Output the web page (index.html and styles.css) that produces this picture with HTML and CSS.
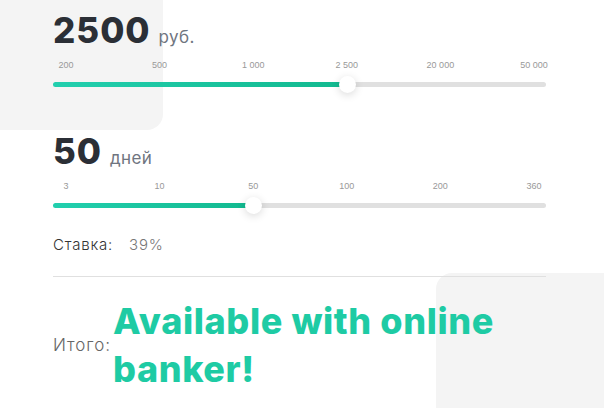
FILE: index.html
```
<!DOCTYPE html>
<html lang="ru">
<head>
<meta charset="utf-8">
<link rel="stylesheet" href="styles.css">
</head>
<body>
<div class="calc">
  <section class="param">
    <div class="value"><span class="num">2500</span><span class="unit">руб.</span></div>
    <div class="ticks"><span>200</span><span>500</span><span>1 000</span><span>2 500</span><span>20 000</span><span>50 000</span></div>
    <div class="slider">
      <div class="fill" style="width: 294px"></div>
      <div class="thumb"></div>
      <div class="rest"></div>
    </div>
  </section>
  <section class="param second">
    <div class="value"><span class="num">50</span><span class="unit">дней</span></div>
    <div class="ticks"><span>3</span><span>10</span><span>50</span><span>100</span><span>200</span><span>360</span></div>
    <div class="slider">
      <div class="fill" style="width: 200px"></div>
      <div class="thumb"></div>
      <div class="rest"></div>
    </div>
  </section>
  <div class="rate"><span class="rate-label">Ставка:</span><span class="rate-value">39%</span></div>
  <div class="divider"></div>
  <div class="total">
    <span class="total-label">Итого:</span>
    <span class="promo">Available with online banker!</span>
  </div>
</div>
</body>
</html>
```
FILE: styles.css
```
html, body {
  margin: 0;
  padding: 0;
}
body {
  width: 604px;
  height: 408px;
  overflow: hidden;
  position: relative;
  background: #ffffff;
  font-family: "Inter", "Liberation Sans", sans-serif;
  color: #2b2f36;
}
body::before {
  content: "";
  position: absolute;
  left: 0;
  top: 0;
  width: 163px;
  height: 130px;
  background: #f4f4f4;
  border-bottom-right-radius: 16px;
  z-index: -1;
}
body::after {
  content: "";
  position: absolute;
  left: 436px;
  top: 273px;
  width: 168px;
  height: 135px;
  background: #f4f4f4;
  border-top-left-radius: 16px;
  z-index: -1;
}
.calc {
  width: 493px;
  padding: 12px 0 0 53px;
}
.value {
  display: flex;
  align-items: baseline;
  height: 41px;
}
.num {
  font-size: 35px;
  font-weight: 800;
  line-height: 36px;
  color: #2b2f36;
  letter-spacing: 1px;
}
.unit {
  font-size: 17px;
  color: #6f7580;
  margin-left: 8px;
  font-weight: 400;
  letter-spacing: 0.4px;
}
.ticks {
  display: flex;
  justify-content: space-between;
  margin: 4px 12px 0 13px;
  height: 16px;
  align-items: center;
}
.ticks span {
  width: 0;
  display: flex;
  justify-content: center;
  white-space: nowrap;
  font-family: "Liberation Sans", Arial, sans-serif;
  font-size: 9px;
  color: #999;
}
.slider {
  display: flex;
  align-items: center;
  height: 16px;
  margin-top: 3px;
}
.fill {
  height: 5px;
  border-radius: 3px 0 0 3px;
  background: linear-gradient(90deg, #22cfae, #12b98f);
}
.thumb {
  width: 17px;
  height: 17px;
  border-radius: 50%;
  background: #fff;
  margin: 0 -8px;
  position: relative;
  z-index: 1;
  box-shadow: 0 2px 8px rgba(0, 0, 0, 0.15);
}
.rest {
  flex: 1;
  height: 5px;
  background: #e0e0e0;
  border-radius: 0 3px 3px 0;
}
.second {
  margin-top: 41px;
}
.rate {
  margin-top: 23px;
  font-size: 15px;
  line-height: 18px;
  display: flex;
  font-weight: 300;
  letter-spacing: 0.8px;
}
.rate-label {
  color: #333;
  width: 76px;
}
.rate-value {
  color: #777;
}
.divider {
  height: 1px;
  background: #e0e0e0;
  margin-top: 22px;
}
.total {
  display: flex;
  align-items: center;
  margin-top: 20px;
}
.total-label {
  font-size: 17px;
  font-weight: 300;
  letter-spacing: 0.9px;
  color: #666;
  width: 60px;
  flex: none;
}
.promo {
  font-size: 36px;
  font-weight: 800;
  line-height: 48px;
  color: #1ecba4;
  letter-spacing: 0.6px;
  width: 430px;
}
```
